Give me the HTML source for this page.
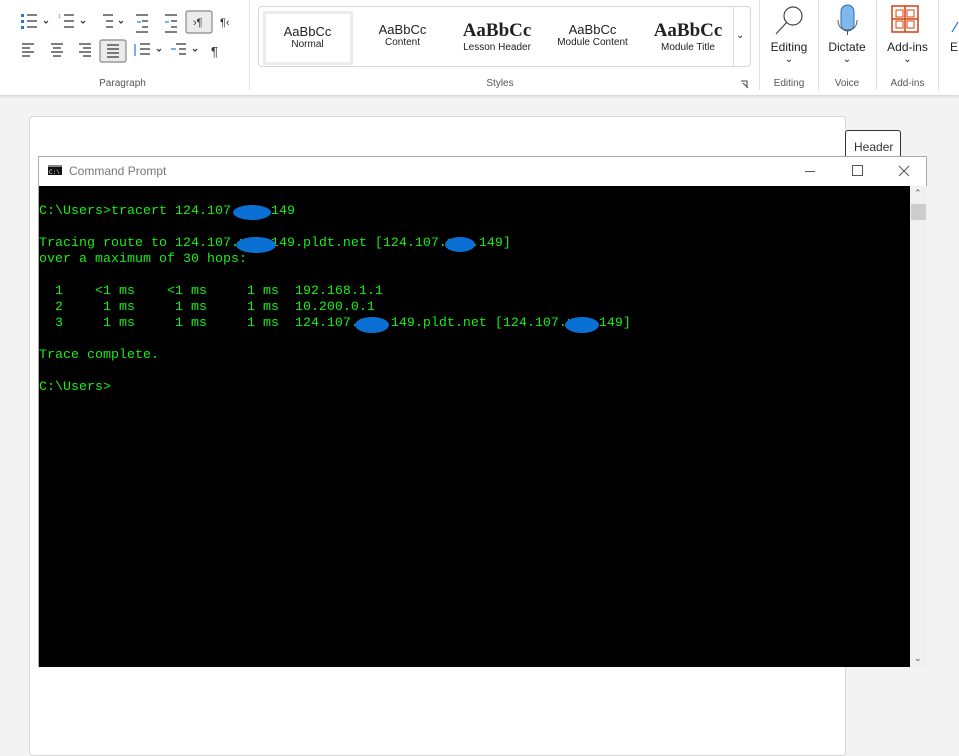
<!DOCTYPE html>
<html><head><meta charset="utf-8"><style>
*{margin:0;padding:0;box-sizing:border-box}
body{width:959px;height:731px;background:#f3f3f3;font-family:"Liberation Sans",sans-serif;position:relative;overflow:hidden}
.rib{position:absolute;left:0;top:0;width:959px;height:95px;background:#fff;box-shadow:0 1px 3px rgba(0,0,0,.18)}
.sep{position:absolute;top:0;width:1px;height:90px;background:#e1e1e1}
.lbl{position:absolute;font-size:10px;color:#555;text-align:center}
.ab{position:absolute;text-align:center;color:#222}
.doc{position:absolute;left:29px;top:116px;width:817px;height:640px;background:#fff;border:1px solid #d8d8d8;border-radius:4px}
.hdr{position:absolute;left:845px;top:130px;width:56px;height:30px;background:#fff;border:1px solid #333;border-radius:3px 3px 0 0;font-size:12px;color:#333;padding:9px 0 0 8px}
.win{position:absolute;left:38px;top:156px;width:889px;height:511px;background:#fff;border:1px solid #aaa}
.con{position:absolute;left:0;top:29px;width:871px;height:481px;background:#000}
pre{position:absolute;left:0;top:18px;font-family:"Liberation Mono",monospace;font-size:13.33px;line-height:16px;color:#16ee16}
.bl{position:absolute;background:#0a70d4;border-radius:50%}
.sb{position:absolute;left:871px;top:29px;width:17px;height:481px;background:#f0f0f0}
</style></head><body>
<div class="rib">
<svg width="250" height="70" style="position:absolute;left:0;top:0" fill="none" stroke="#333" stroke-width="1.2">
<g fill="#1e7ad3" stroke="none"><rect x="21" y="14" width="3" height="3"/><rect x="21" y="20" width="3" height="3"/><rect x="21" y="26" width="3" height="3"/></g>
<path d="M27 15h10M27 21h10M27 27h10M44 21l2 2 2-2"/>
<path d="M64 15h10M64 21h10M64 27h10M81 21l2 2 2-2" /><text x="58" y="18" font-size="5" fill="#1e7ad3" stroke="none">1</text>
<path d="M103 15h10M106 21h7M106 27h7M119 21l2 2 2-2"/>
<path d="M136 15h12M142 21h6M142 27h6M136 32h12" /><path d="M137 22h4" stroke="#1e7ad3"/>
<path d="M165 15h12M171 21h6M171 27h6M165 32h12"/><path d="M165 22h4" stroke="#1e7ad3"/>
<rect x="186" y="11" width="26" height="22" rx="2" fill="#ebebeb" stroke="#888"/>
<text x="193" y="26" font-size="11" fill="#333" stroke="none">›¶</text>
<text x="220" y="26" font-size="11" fill="#333" stroke="none">¶‹</text>
<path d="M22 44h12M22 48h8M22 52h12M22 56h8"/>
<path d="M51 44h12M53 48h8M51 52h12M53 56h8"/>
<path d="M79 44h12M83 48h8M79 52h12M83 56h8"/>
<rect x="100" y="40" width="26" height="22" rx="2" fill="#ebebeb" stroke="#888"/>
<path d="M107 45h12M107 49h12M107 53h12M107 57h12"/>
<path d="M140 44h10M140 49h10M140 54h10M157 49l2 2 2-2"/><path d="M135 44v12" stroke="#1e7ad3"/>
<path d="M176 44h10M179 49h7M179 54h7M193 49l2 2 2-2"/><path d="M171 49h5" stroke="#1e7ad3"/>
<text x="211" y="56" font-size="13" fill="#333" stroke="none">¶</text>
<path d="M231 82h6v6"/>
</svg>
<div class="lbl" style="left:90px;top:78px;width:65px">Paragraph</div>
<div class="sep" style="left:249px"></div>
<div style="position:absolute;left:258px;top:6px;width:493px;height:61px;border:1px solid #d6d6d6;border-radius:4px"></div>
<div style="position:absolute;left:263px;top:11px;width:90px;height:54px;border:3px solid #ececec"></div>
<div class="ab" style="left:265px;top:24px;width:85px;font-size:13px">AaBbCc<div style="font-size:10px">Normal</div></div>
<div class="ab" style="left:360px;top:22px;width:85px;font-size:13px">AaBbCc<div style="font-size:10px">Content</div></div>
<div class="ab" style="left:447px;top:20px;width:100px;font-size:19px;font-family:'Liberation Serif',serif;font-weight:bold">AaBbCc<div style="font-size:10px;font-family:'Liberation Sans';font-weight:normal">Lesson Header</div></div>
<div class="ab" style="left:545px;top:22px;width:95px;font-size:13px">AaBbCc<div style="font-size:10px">Module Content</div></div>
<div class="ab" style="left:638px;top:20px;width:100px;font-size:19px;font-family:'Liberation Serif',serif;font-weight:bold">AaBbCc<div style="font-size:10px;font-family:'Liberation Sans';font-weight:normal">Module Title</div></div>
<div style="position:absolute;left:733px;top:7px;width:1px;height:59px;background:#ddd"></div>
<div class="ab" style="left:736px;top:30px;font-size:10px">⌄</div>
<div class="lbl" style="left:470px;top:78px;width:60px">Styles</div>
<svg width="10" height="10" style="position:absolute;left:740px;top:80px" fill="none" stroke="#444"><path d="M1 1h6v6M3 3l5 5"/></svg>
<div class="sep" style="left:759px"></div>
<svg width="200" height="40" style="position:absolute;left:760px;top:0" fill="none">
<circle cx="33" cy="16" r="9" stroke="#444" stroke-width="1.2"/><path d="M27 22l-11 12" stroke="#444" stroke-width="1.2"/>
<rect x="81" y="5" width="13" height="26" rx="6.5" fill="#7fb8ea" stroke="#2d6fb4"/><path d="M78 20c0 7 4 10 9.5 10s9.5-3 9.5-10M87.5 30v5" stroke="#555"/>
<rect x="132" y="6" width="26" height="26" stroke="#d0400f" stroke-width="1.5"/><path d="M145 6v26M132 19h26" stroke="#d0400f" stroke-width="1.5"/>
<rect x="136" y="10" width="7" height="7" stroke="#d0400f"/><rect x="147" y="10" width="7" height="7" stroke="#d0400f"/><rect x="136" y="21" width="7" height="7" stroke="#d0400f"/><rect x="147" y="21" width="7" height="7" stroke="#d0400f"/>
<path d="M198 22l-6 10" stroke="#1e6fd0" stroke-width="1.2"/>
</svg>
<div class="ab" style="left:764px;top:40px;width:50px;font-size:12px">Editing<div style="font-size:10px">⌄</div></div>
<div class="lbl" style="left:764px;top:78px;width:50px">Editing</div>
<div class="sep" style="left:818px"></div>
<div class="ab" style="left:822px;top:40px;width:50px;font-size:12px">Dictate<div style="font-size:10px">⌄</div></div>
<div class="lbl" style="left:822px;top:78px;width:50px">Voice</div>
<div class="sep" style="left:876px"></div>
<div class="ab" style="left:880px;top:40px;width:55px;font-size:12px">Add-ins<div style="font-size:10px">⌄</div></div>
<div class="lbl" style="left:880px;top:78px;width:55px">Add-ins</div>
<div class="sep" style="left:938px"></div>
<div class="ab" style="left:950px;top:40px;font-size:12px">E</div>
</div>
<div class="doc"></div>
<div class="hdr">Header</div>
<div class="win">
<svg width="16" height="12" style="position:absolute;left:9px;top:8px"><rect width="14" height="10" fill="#111"/><rect width="14" height="2" fill="#888"/><text x="1" y="9" font-size="6" fill="#ddd" font-family="Liberation Mono">C:\</text></svg>
<div style="position:absolute;left:30px;top:7px;font-size:12px;color:#777">Command Prompt</div>
<svg width="120" height="30" style="position:absolute;left:765px;top:0" fill="none" stroke="#555"><path d="M1 14.5h10"/><rect x="48.5" y="8.5" width="10" height="10"/><path d="M95 9l10 10M105 9l-10 10"/></svg>
<div class="con">
<pre>C:\Users&gt;tracert 124.107.xxx.149

Tracing route to 124.107.xxx.149.pldt.net [124.107.xxx.149]
over a maximum of 30 hops:

  1    &lt;1 ms    &lt;1 ms     1 ms  192.168.1.1
  2     1 ms     1 ms     1 ms  10.200.0.1
  3     1 ms     1 ms     1 ms  124.107.xxx.149.pldt.net [124.107.xxx.149]

Trace complete.

C:\Users&gt;</pre>
<div class="bl" style="left:194px;top:19px;width:38px;height:15px"></div>
<div class="bl" style="left:197px;top:51px;width:40px;height:16px"></div>
<div class="bl" style="left:406px;top:51px;width:30px;height:15px"></div>
<div class="bl" style="left:316px;top:131px;width:34px;height:16px"></div>
<div class="bl" style="left:526px;top:131px;width:34px;height:16px"></div>
</div>
<div class="sb"><div style="position:absolute;left:1px;top:18px;width:15px;height:16px;background:#cdcdcd"></div><div style="position:absolute;left:4px;top:2px;font-size:9px;color:#555">⌃</div><div style="position:absolute;left:4px;bottom:3px;font-size:9px;color:#555">⌄</div></div>
</div>
</body></html>
